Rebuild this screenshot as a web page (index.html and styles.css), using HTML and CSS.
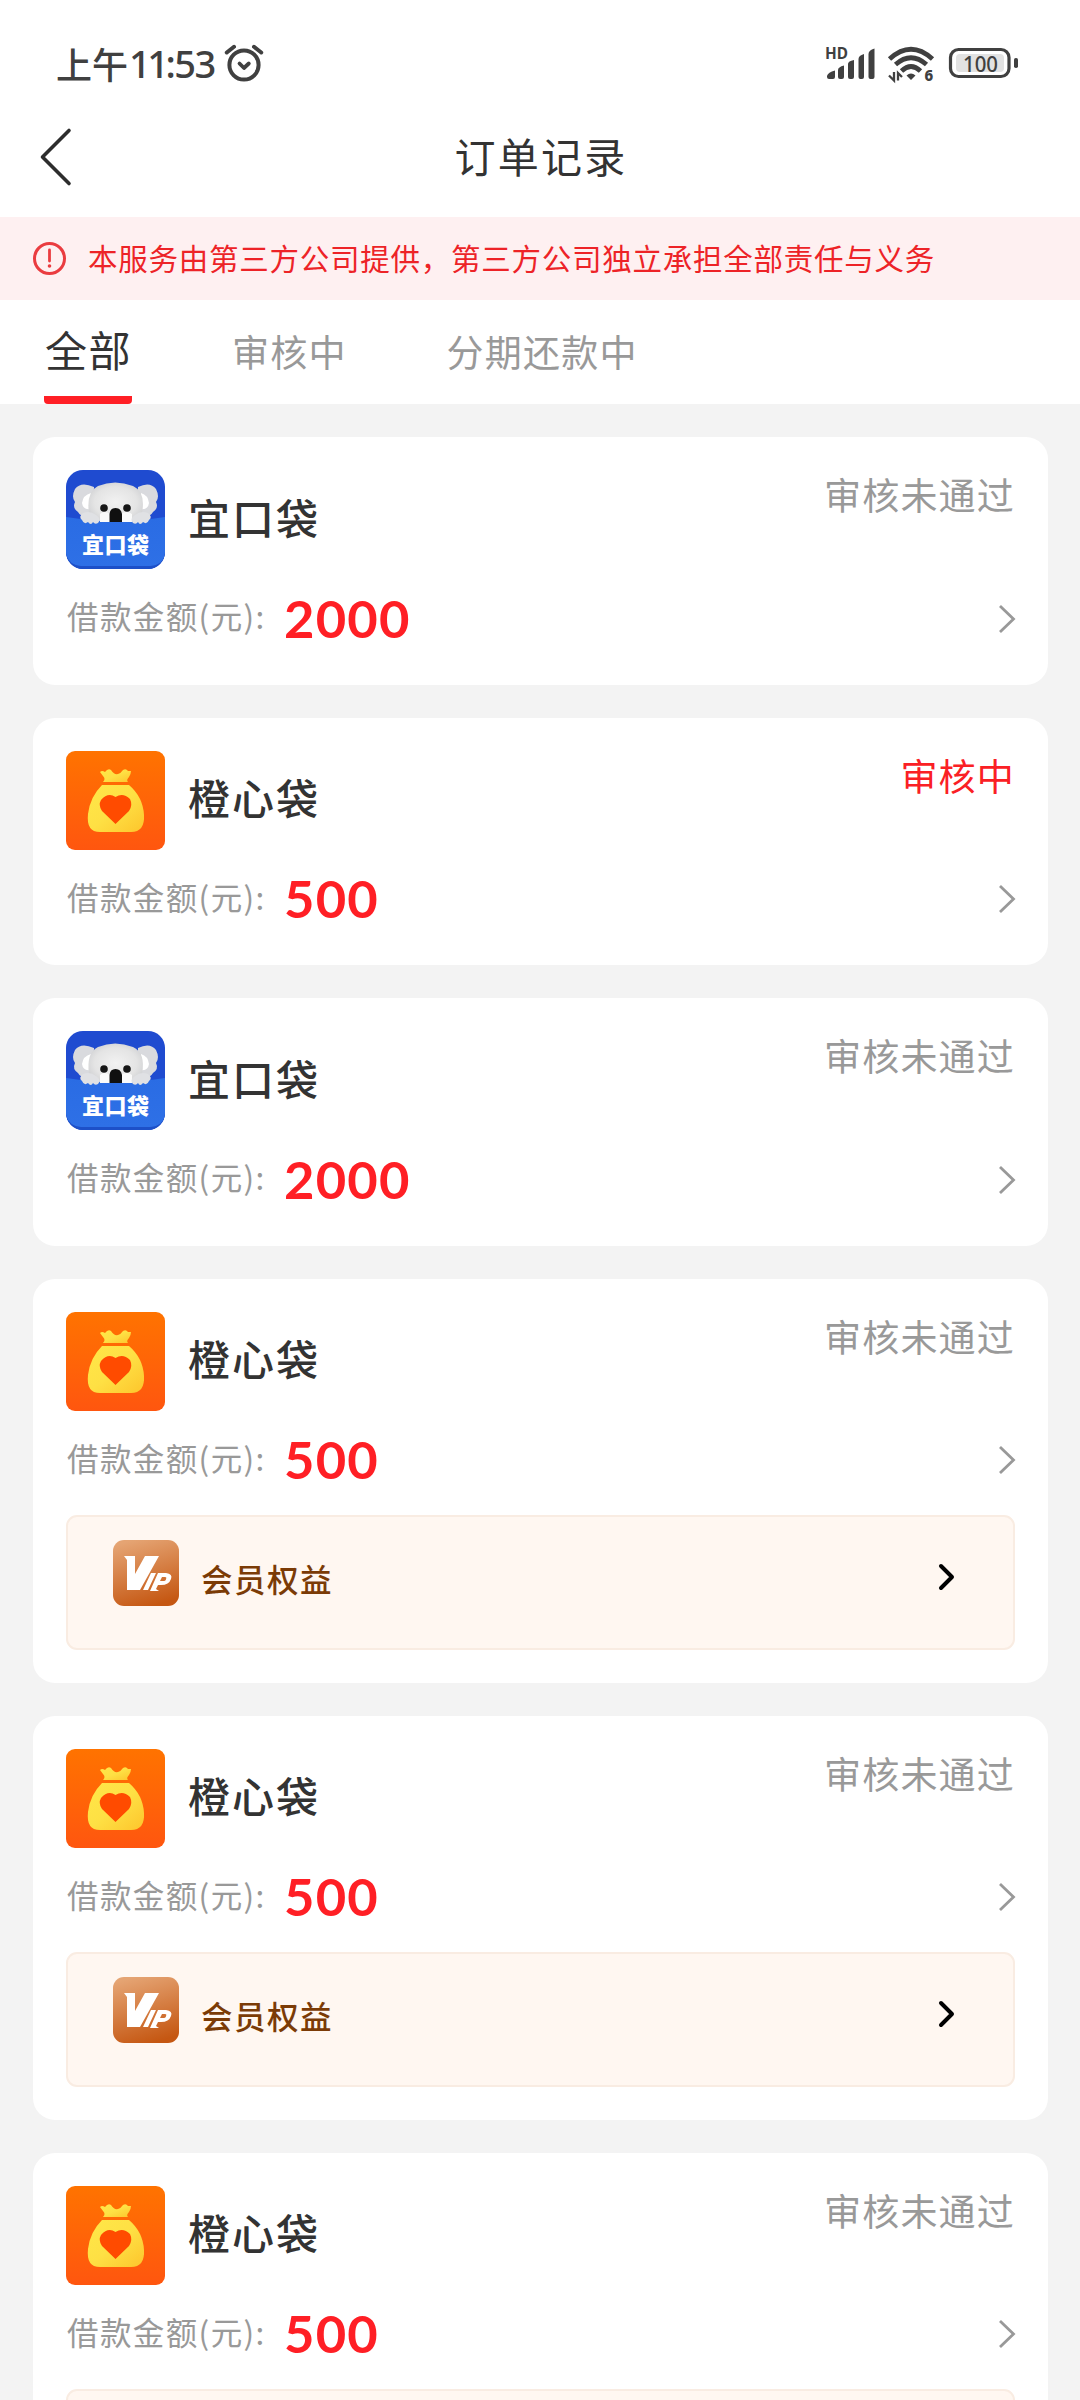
FILE: index.html
```html
<!DOCTYPE html>
<html lang="zh-CN">
<head>
<meta charset="utf-8">
<title>订单记录</title>
<link rel="stylesheet" href="styles.css">
</head>
<body>
<svg class="defs" width="0" height="0" aria-hidden="true">
  <defs>
    <linearGradient id="g-blue" x1="0" y1="0" x2="0" y2="1"><stop offset="0" stop-color="#2a6ce4"/><stop offset="1" stop-color="#2e70e6"/></linearGradient>
    <radialGradient id="g-head" cx=".5" cy=".5" r=".65"><stop offset="0" stop-color="#f2f2f2"/><stop offset=".6" stop-color="#e4e4e4"/><stop offset="1" stop-color="#c8c9cc"/></radialGradient>
    <linearGradient id="g-orange" x1="0" y1="0" x2="0" y2="1"><stop offset="0" stop-color="#ff7300"/><stop offset="1" stop-color="#ff560f"/></linearGradient>
    <linearGradient id="g-bag" x1="0" y1="0" x2="1" y2="1"><stop offset="0" stop-color="#ffe748"/><stop offset=".5" stop-color="#fee044"/><stop offset="1" stop-color="#fdc52c"/></linearGradient>
    <linearGradient id="g-vip" x1=".3" y1="0" x2=".6" y2="1"><stop offset="0" stop-color="#e5a473"/><stop offset="1" stop-color="#c55712"/></linearGradient>
    <clipPath id="c-koala"><rect width="99" height="99" rx="17"/></clipPath>
  </defs>
  <symbol id="koala" viewBox="0 0 99 99">
    <g clip-path="url(#c-koala)">
      <rect width="99" height="99" fill="#1f4bd0"/>
      <path d="M0 70h99v29H0z" fill="#1d50c8"/>
      <path d="M0 47Q50 55 99 47V84Q97 95 84 96H15Q3 95 0 84Z" fill="url(#g-blue)"/>
      <path d="M28 17Q15 11 9 19Q5 27 9 32Q6 38 12 42Q15 48 27 46Z" fill="#d9dade"/>
      <path d="M72 17Q84 11 90 19Q94 27 90 32Q93 38 87 42Q84 48 72 46Z" fill="#d9dade"/>
      <path d="M25 23Q17 25 16 33Q17 40 24 39ZM75 23Q82 25 83 33Q82 40 75 39Z" fill="#fff"/>
      <path d="M23 43Q20 22 32 16Q49 9 67 16Q80 22 76 43Q72 51 61 52H38Q27 50 23 43Z" fill="url(#g-head)"/>
      <path d="M34 44Q38 40 44 44V52H34ZM55 44Q61 40 66 44V52H55Z" fill="#fafafa"/>
      <path d="M17 43Q24 40 30 45Q36 49 32 53Q29 55 27 52Q25 56 22 52Q18 55 16 50Q12 47 17 43ZM82 43Q75 40 69 45Q63 49 67 53Q70 55 72 52Q74 56 77 52Q81 55 83 50Q87 47 82 43Z" fill="#e0e1e4"/>
      <circle cx="38" cy="38" r="3.800" fill="#161616"/><circle cx="61" cy="38" r="3.800" fill="#161616"/>
      <path d="M43.500 52V44Q44 38 49.500 38Q55 38 56 44V52Z" fill="#101010"/>
      <text class="koala-text" x="16" y="82.500" textLength="67">宜口袋</text>
    </g>
  </symbol>
  <symbol id="bag" viewBox="0 0 99 99">
    <rect width="99" height="99" rx="9" fill="url(#g-orange)"/>
    <path d="M34 21Q36 19 39 21Q42 17 45 19Q48 24 52 23Q55 22 57 19Q60 17 62 20L65 20Q65 23 63 26Q60 29 62 31H37Q40 28 37 25Z" fill="url(#g-bag)"/>
    <path d="M36 34H63Q77 46 78 64Q79 81 65 81H34Q20 81 22 63Q24 46 36 34Z" fill="url(#g-bag)"/>
    <path d="M49.500 73L36 60Q32 54 35 49Q42 41 49.500 46Q57 41 64 48Q67 54 63 60Z" fill="#ff4b00"/>
  </symbol>
  <symbol id="vip" viewBox="0 0 66 66">
    <rect width="66" height="66" rx="11" fill="url(#g-vip)"/>
    <path d="M11 16H22V34L32 16H46L27 50H14V20Z" fill="#fff"/>
    <path d="M38 33H43L35 50H30ZM45 33H53Q60 34 58 39Q56 45 48 45H45L43 49L46 51H37ZM49 37L47 41H50Q53 41 53 39Q54 37 52 37Z" fill="#fff" fill-rule="evenodd"/>
  </symbol>
  <symbol id="next" viewBox="0 0 18 32"><path d="M2 3L15.500 16L2 29" fill="none" stroke="currentColor" stroke-width="2.800"/></symbol>
  <symbol id="next-bold" viewBox="0 0 18 30"><path d="M3 4L14 15L3 26" fill="none" stroke="currentColor" stroke-width="4" stroke-linecap="round" stroke-linejoin="round"/></symbol>
</svg>

<div class="screen">
  <header class="statusbar">
    <div class="clock"><span>上午</span><span class="digits"><i>11</i>:53</span></div>
    <svg class="alarm" width="42" height="40" viewBox="0 0 42 40"><g fill="none" stroke="#404040" stroke-linecap="round" stroke-linejoin="round"><circle cx="21" cy="22" r="14.600" stroke-width="4"/><path d="M3.800 9.500L11 3.800M38.200 9.500L31 3.800" stroke-width="4"/><path d="M16.500 20.500L21 25L25.800 20.500" stroke-width="3.800"/></g></svg>
    <svg class="system" width="196" height="40" viewBox="824 44 196 40" fill="#404040">
      <text class="hd" x="825" y="59.300" textLength="23" lengthAdjust="spacingAndGlyphs">HD</text>
      <path d="M827 76Q828 72 835 70.500V77Q835 79 833 79H829Q827 79 827 77ZM838 70Q838 67 844 65.500V77Q844 79 842 79H840Q838 79 838 77ZM848 64Q848 61 854 60V77Q854 79 852 79H850Q848 79 848 77ZM858.500 59Q858.500 55.500 864 54V77Q864 79 862 79H860.500Q858.500 79 858.500 77ZM868.500 54Q868.500 50 874.500 48.500V77Q874.500 79 872.500 79H870.500Q868.500 79 868.500 77Z"/>
      <g fill="none" stroke="#404040" stroke-width="4.800"><path d="M889.500 59Q911 39.500 932.500 59"/><path d="M895.500 64.500Q911 51 926.500 64.500"/><path d="M901.500 71Q911 62 920.500 71"/></g>
      <path d="M906.500 75.500Q911 71.500 915.500 75.500L911 80Z"/>
      <path d="M889 75.500L894 80.500V72M898 80.500V73L902 77" fill="none" stroke="#404040" stroke-width="2.300"/>
      <text class="wifi6" x="924.500" y="80.500">6</text>
      <rect x="950.500" y="49.500" width="58.500" height="27" rx="8" fill="none" stroke="#404040" stroke-width="3.200"/>
      <rect x="956" y="54" width="48" height="18" rx="4" fill="#e2e2e2"/>
      <text class="pct" x="963" y="72" textLength="35" lengthAdjust="spacingAndGlyphs">100</text>
      <rect x="1014" y="58" width="4" height="10" rx="1.800"/>
    </svg>
  </header>

  <nav class="titlebar">
    <svg class="back" width="34" height="60" viewBox="0 0 34 60"><path d="M31 3.500L4.500 30L31 56.500" fill="none" stroke="#2d2d2d" stroke-width="3.600" stroke-linecap="round" stroke-linejoin="round"/></svg>
    <h1>订单记录</h1>
  </nav>

  <div class="notice">
    <svg width="35" height="35" viewBox="0 0 35 35"><circle cx="17.500" cy="17.500" r="15" fill="none" stroke="#ea3c40" stroke-width="3"/><path d="M17.500 9V20" stroke="#ea3c40" stroke-width="2.800" stroke-linecap="round"/><circle cx="17.500" cy="25" r="1.800" fill="#ea3c40"/></svg>
    <p>本服务由第三方公司提供，第三方公司独立承担全部责任与义务</p>
  </div>

  <div class="tabs">
    <span class="tab active">全部</span><span class="tab">审核中</span><span class="tab">分期还款中</span>
  </div>

  <main class="orders">
    <section class="card">
      <div class="head"><svg class="logo"><use href="#koala"/></svg><h2>宜口袋</h2><span class="state">审核未通过</span></div>
      <div class="amount"><span class="label">借款金额(元):</span><b>2000</b><svg class="next"><use href="#next"/></svg></div>
    </section>
    <section class="card">
      <div class="head"><svg class="logo"><use href="#bag"/></svg><h2>橙心袋</h2><span class="state pending">审核中</span></div>
      <div class="amount"><span class="label">借款金额(元):</span><b>500</b><svg class="next"><use href="#next"/></svg></div>
    </section>
    <section class="card">
      <div class="head"><svg class="logo"><use href="#koala"/></svg><h2>宜口袋</h2><span class="state">审核未通过</span></div>
      <div class="amount"><span class="label">借款金额(元):</span><b>2000</b><svg class="next"><use href="#next"/></svg></div>
    </section>
    <section class="card">
      <div class="head"><svg class="logo"><use href="#bag"/></svg><h2>橙心袋</h2><span class="state">审核未通过</span></div>
      <div class="amount"><span class="label">借款金额(元):</span><b>500</b><svg class="next"><use href="#next"/></svg></div>
      <div class="vip"><svg class="badge"><use href="#vip"/></svg><span>会员权益</span><svg class="go"><use href="#next-bold"/></svg></div>
    </section>
    <section class="card">
      <div class="head"><svg class="logo"><use href="#bag"/></svg><h2>橙心袋</h2><span class="state">审核未通过</span></div>
      <div class="amount"><span class="label">借款金额(元):</span><b>500</b><svg class="next"><use href="#next"/></svg></div>
      <div class="vip"><svg class="badge"><use href="#vip"/></svg><span>会员权益</span><svg class="go"><use href="#next-bold"/></svg></div>
    </section>
    <section class="card last">
      <div class="head"><svg class="logo"><use href="#bag"/></svg><h2>橙心袋</h2><span class="state">审核未通过</span></div>
      <div class="amount"><span class="label">借款金额(元):</span><b>500</b><svg class="next"><use href="#next"/></svg></div>
      <div class="vip"></div>
    </section>
  </main>
</div>
</body>
</html>
```
FILE: styles.css
```css
* { box-sizing: border-box; margin: 0; padding: 0; }
body {
  background: #f3f3f3;
  color: #333;
  font-family: "Noto Sans CJK SC", sans-serif;
  line-height: 1;
  overflow: hidden;
}
svg { display: block; flex: none; }
.defs { position: absolute; }
.screen { width: 1080px; height: 2400px; overflow: hidden; }

.statusbar {
  display: flex;
  align-items: flex-start;
  height: 97px;
  padding: 43px 60px 0 56px;
  background: #fff;
}
.clock { display: flex; width: 167px; font-size: 36px; font-weight: 500; line-height: 40px; color: #404040; white-space: nowrap; }
.digits { padding-left: 1px; font-family: "Noto Sans", sans-serif; font-weight: 500; font-size: 38px; letter-spacing: -1.500px; }
.digits i { font-style: normal; letter-spacing: -3.500px; }
.system { margin: 1px 0 0 auto; }
.hd { font: 700 16.500px "Noto Sans", sans-serif; }
.wifi6 { font: 800 15px "Noto Sans", sans-serif; }
.pct { font: 500 22px "Noto Sans", sans-serif; }
.koala-text { font: 900 22px "Noto Sans CJK SC", sans-serif; fill: #fff; }

.titlebar {
  display: grid;
  grid-template-columns: 80px 1fr 80px;
  align-items: center;
  height: 120px;
  padding-left: 38px;
  background: #fff;
}
.titlebar h1 { padding: 0 36px 3px 0; text-align: center; font-size: 41px; font-weight: 400; letter-spacing: 2.200px; }

.notice {
  display: flex;
  align-items: center;
  gap: 21px;
  height: 83px;
  padding-left: 32px;
  background: #fef0f1;
  color: #ed2327;
}
.notice p { padding-bottom: 2px; font-size: 29.500px; letter-spacing: .75px; white-space: nowrap; }

.tabs {
  display: flex;
  gap: 100px;
  height: 104px;
  padding-left: 44px;
  background: #fff;
}
.tab { padding-top: 33px; font-size: 37px; letter-spacing: 1.200px; color: #999; white-space: nowrap; }
.tab.active {
  padding: 28px 0 0 1px;
  width: 88px;
  border-bottom: 8px solid #ff1f25;
  border-radius: 4px;
  font-size: 42px;
  letter-spacing: 1.500px;
  color: #333;
}

.orders { display: flex; flex-direction: column; gap: 33px; padding: 33px 32px 33px 33px; }
.card { flex: none; padding: 33px 33px 32.500px; background: #fff; border-radius: 22px; }
.head { display: flex; align-items: flex-start; height: 99px; }
.logo { width: 99px; height: 99px; }
.head h2 { padding: 25.500px 0 0 23px; font-size: 42px; font-weight: 500; letter-spacing: 2px; }
.state { margin-left: auto; padding-top: 6px; font-size: 37px; letter-spacing: 1.200px; color: #999; }
.pending { color: #fa2024; }
.amount { display: flex; align-items: center; height: 69px; margin-top: 14px; }
.label { width: 218px; padding: 0 0 3px 1px; font-size: 31.500px; letter-spacing: 1.400px; color: #999; white-space: nowrap; }
.amount b { padding-top: 1px; font: 700 52.500px/1 Lato, sans-serif; letter-spacing: 1.200px; color: #ff1f25; }
.next { width: 18px; height: 32px; margin: 2px -1px 0 auto; color: #999; }

.vip {
  display: flex;
  align-items: flex-start;
  height: 135px;
  margin-top: 21.500px;
  padding: 23px 57px 0 45px;
  background: #fff7f1;
  border: 2px solid #f9ece2;
  border-radius: 11px;
}
.badge { width: 66px; height: 66px; }
.vip span { padding: 22.500px 0 0 22px; font-size: 31.500px; font-weight: 500; letter-spacing: 1.500px; color: #7b3b06; }
.go { width: 18px; height: 30px; margin: 22px 0 0 auto; color: #000; }
```
